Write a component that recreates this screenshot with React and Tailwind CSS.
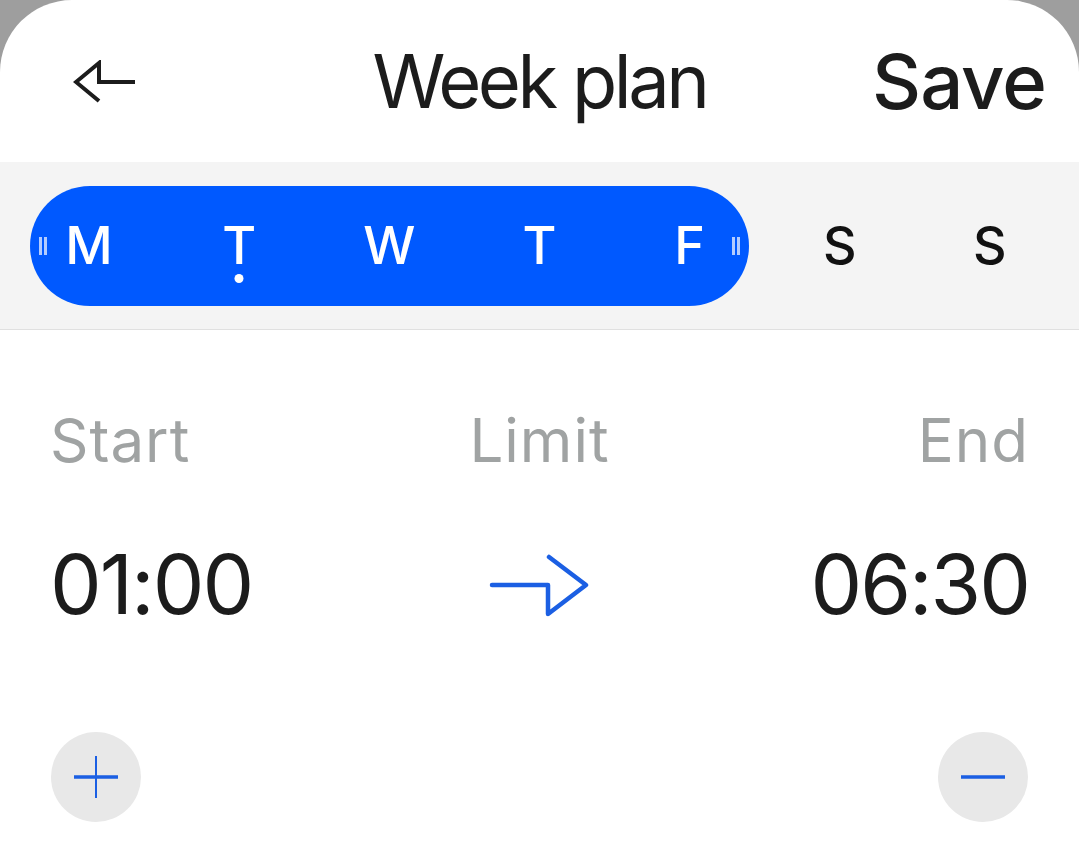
import React, { useState } from 'react';

const days = [
  { id: 1, label: 'M', col: 'col-start-1' },
  { id: 2, label: 'T', col: 'col-start-2', today: true },
  { id: 3, label: 'W', col: 'col-start-3' },
  { id: 4, label: 'T', col: 'col-start-4' },
  { id: 5, label: 'F', col: 'col-start-5' },
  { id: 6, label: 'S', col: 'col-start-6' },
  { id: 7, label: 'S', col: 'col-start-7' }
];

const font = { fontFamily: 'Inter, "Noto Sans", sans-serif' };

const Handle = () => (
  <div className="flex gap-[2px]">
    <span className="block w-[3px] h-[18px] bg-[#b3ccff]" />
    <span className="block w-[3px] h-[18px] bg-[#b3ccff]" />
  </div>
);

const BackArrow = () => (
  <svg width="64" height="44" viewBox="73 56 64 44" fill="none">
    <path d="M99 97 L76 78 L99 59 L99 78 L135 78" stroke="#1c1c1c" strokeWidth="4" strokeLinejoin="miter" />
  </svg>
);

const LimitArrow = () => (
  <svg width="100" height="64" viewBox="489 552 100 64" fill="none">
    <path d="M492 584 L548 584 L548 613 L586 584 L549 556" stroke="#1b5fe3" strokeWidth="4.5" strokeLinejoin="round" strokeLinecap="round" />
  </svg>
);

const App = () => {
  const [activeDays] = useState([1, 2, 3, 4, 5]);

  return (
    <div className="min-h-screen bg-[#9e9e9e]" style={font}>
      <div className="min-h-screen bg-white rounded-t-[72px] overflow-hidden">
        {/* header */}
        <div className="h-[162px] grid grid-cols-[1fr_auto_1fr] items-center">
          <div className="pl-[73px] pt-[2px]">
            <BackArrow />
          </div>
          <h1 className="text-[74px] leading-none text-[#1c1c1c] font-normal tracking-[-3.5px]">Week plan</h1>
          <div className="flex justify-end pr-[33px]">
            <span className="text-[76px] leading-none text-[#1c1c1c] font-medium tracking-[-1px]">Save</span>
          </div>
        </div>

        {/* day selector */}
        <div className="bg-[#f4f4f4] border-b border-[#e0e0e0] pt-[24px] pb-[23px]">
          <div className="grid grid-cols-7 px-[14px]">
            <div className="col-start-1 col-end-6 row-start-1 mx-[16px] h-[120px] rounded-full bg-[#0059ff] flex items-center justify-between px-[9px]">
              <Handle />
              <Handle />
            </div>
            {days.map((day) => {
              const active = activeDays.includes(day.id);
              return (
                <div key={day.id} className={`${day.col} row-start-1 relative flex items-center justify-center`}>
                  <span className={`text-[52px] leading-none font-medium ${active ? 'text-white' : 'text-[#111]'}`}>
                    {day.label}
                  </span>
                  {day.today && (
                    <span className="absolute left-1/2 top-[88px] -translate-x-1/2 w-[9px] h-[9px] rounded-full bg-white" />
                  )}
                </div>
              );
            })}
          </div>
        </div>

        {/* labels */}
        <div className="grid grid-cols-3 px-[50px] pt-[80px] text-[60px] leading-none text-[#a0a3a3] tracking-[1px]">
          <span>Start</span>
          <span className="text-center">Limit</span>
          <span className="text-right">End</span>
        </div>

        {/* times */}
        <div className="grid grid-cols-3 items-center px-[50px] pt-[74px] text-[82px] leading-none text-[#1c1c1c]">
          <span className="tracking-[-2px]">01:00</span>
          <div className="flex justify-center">
            <LimitArrow />
          </div>
          <span className="text-right tracking-[-2px]">06:30</span>
        </div>

        {/* adjust buttons */}
        <div className="flex justify-between px-[51px] pt-[106px]">
          <button className="w-[90px] h-[90px] rounded-full bg-[#e8e8e8] flex items-center justify-center">
            <svg width="46" height="42" viewBox="0 0 46 42">
              <line x1="23" y1="0" x2="23" y2="42" stroke="#1b5fe3" strokeWidth="2" />
              <line x1="1" y1="21" x2="45" y2="21" stroke="#1b5fe3" strokeWidth="3.5" />
            </svg>
          </button>
          <button className="w-[90px] h-[90px] rounded-full bg-[#e8e8e8] flex items-center justify-center">
            <svg width="46" height="42" viewBox="0 0 46 42">
              <line x1="1" y1="21" x2="45" y2="21" stroke="#1b5fe3" strokeWidth="3.5" />
            </svg>
          </button>
        </div>
      </div>
    </div>
  );
};

export default App;
